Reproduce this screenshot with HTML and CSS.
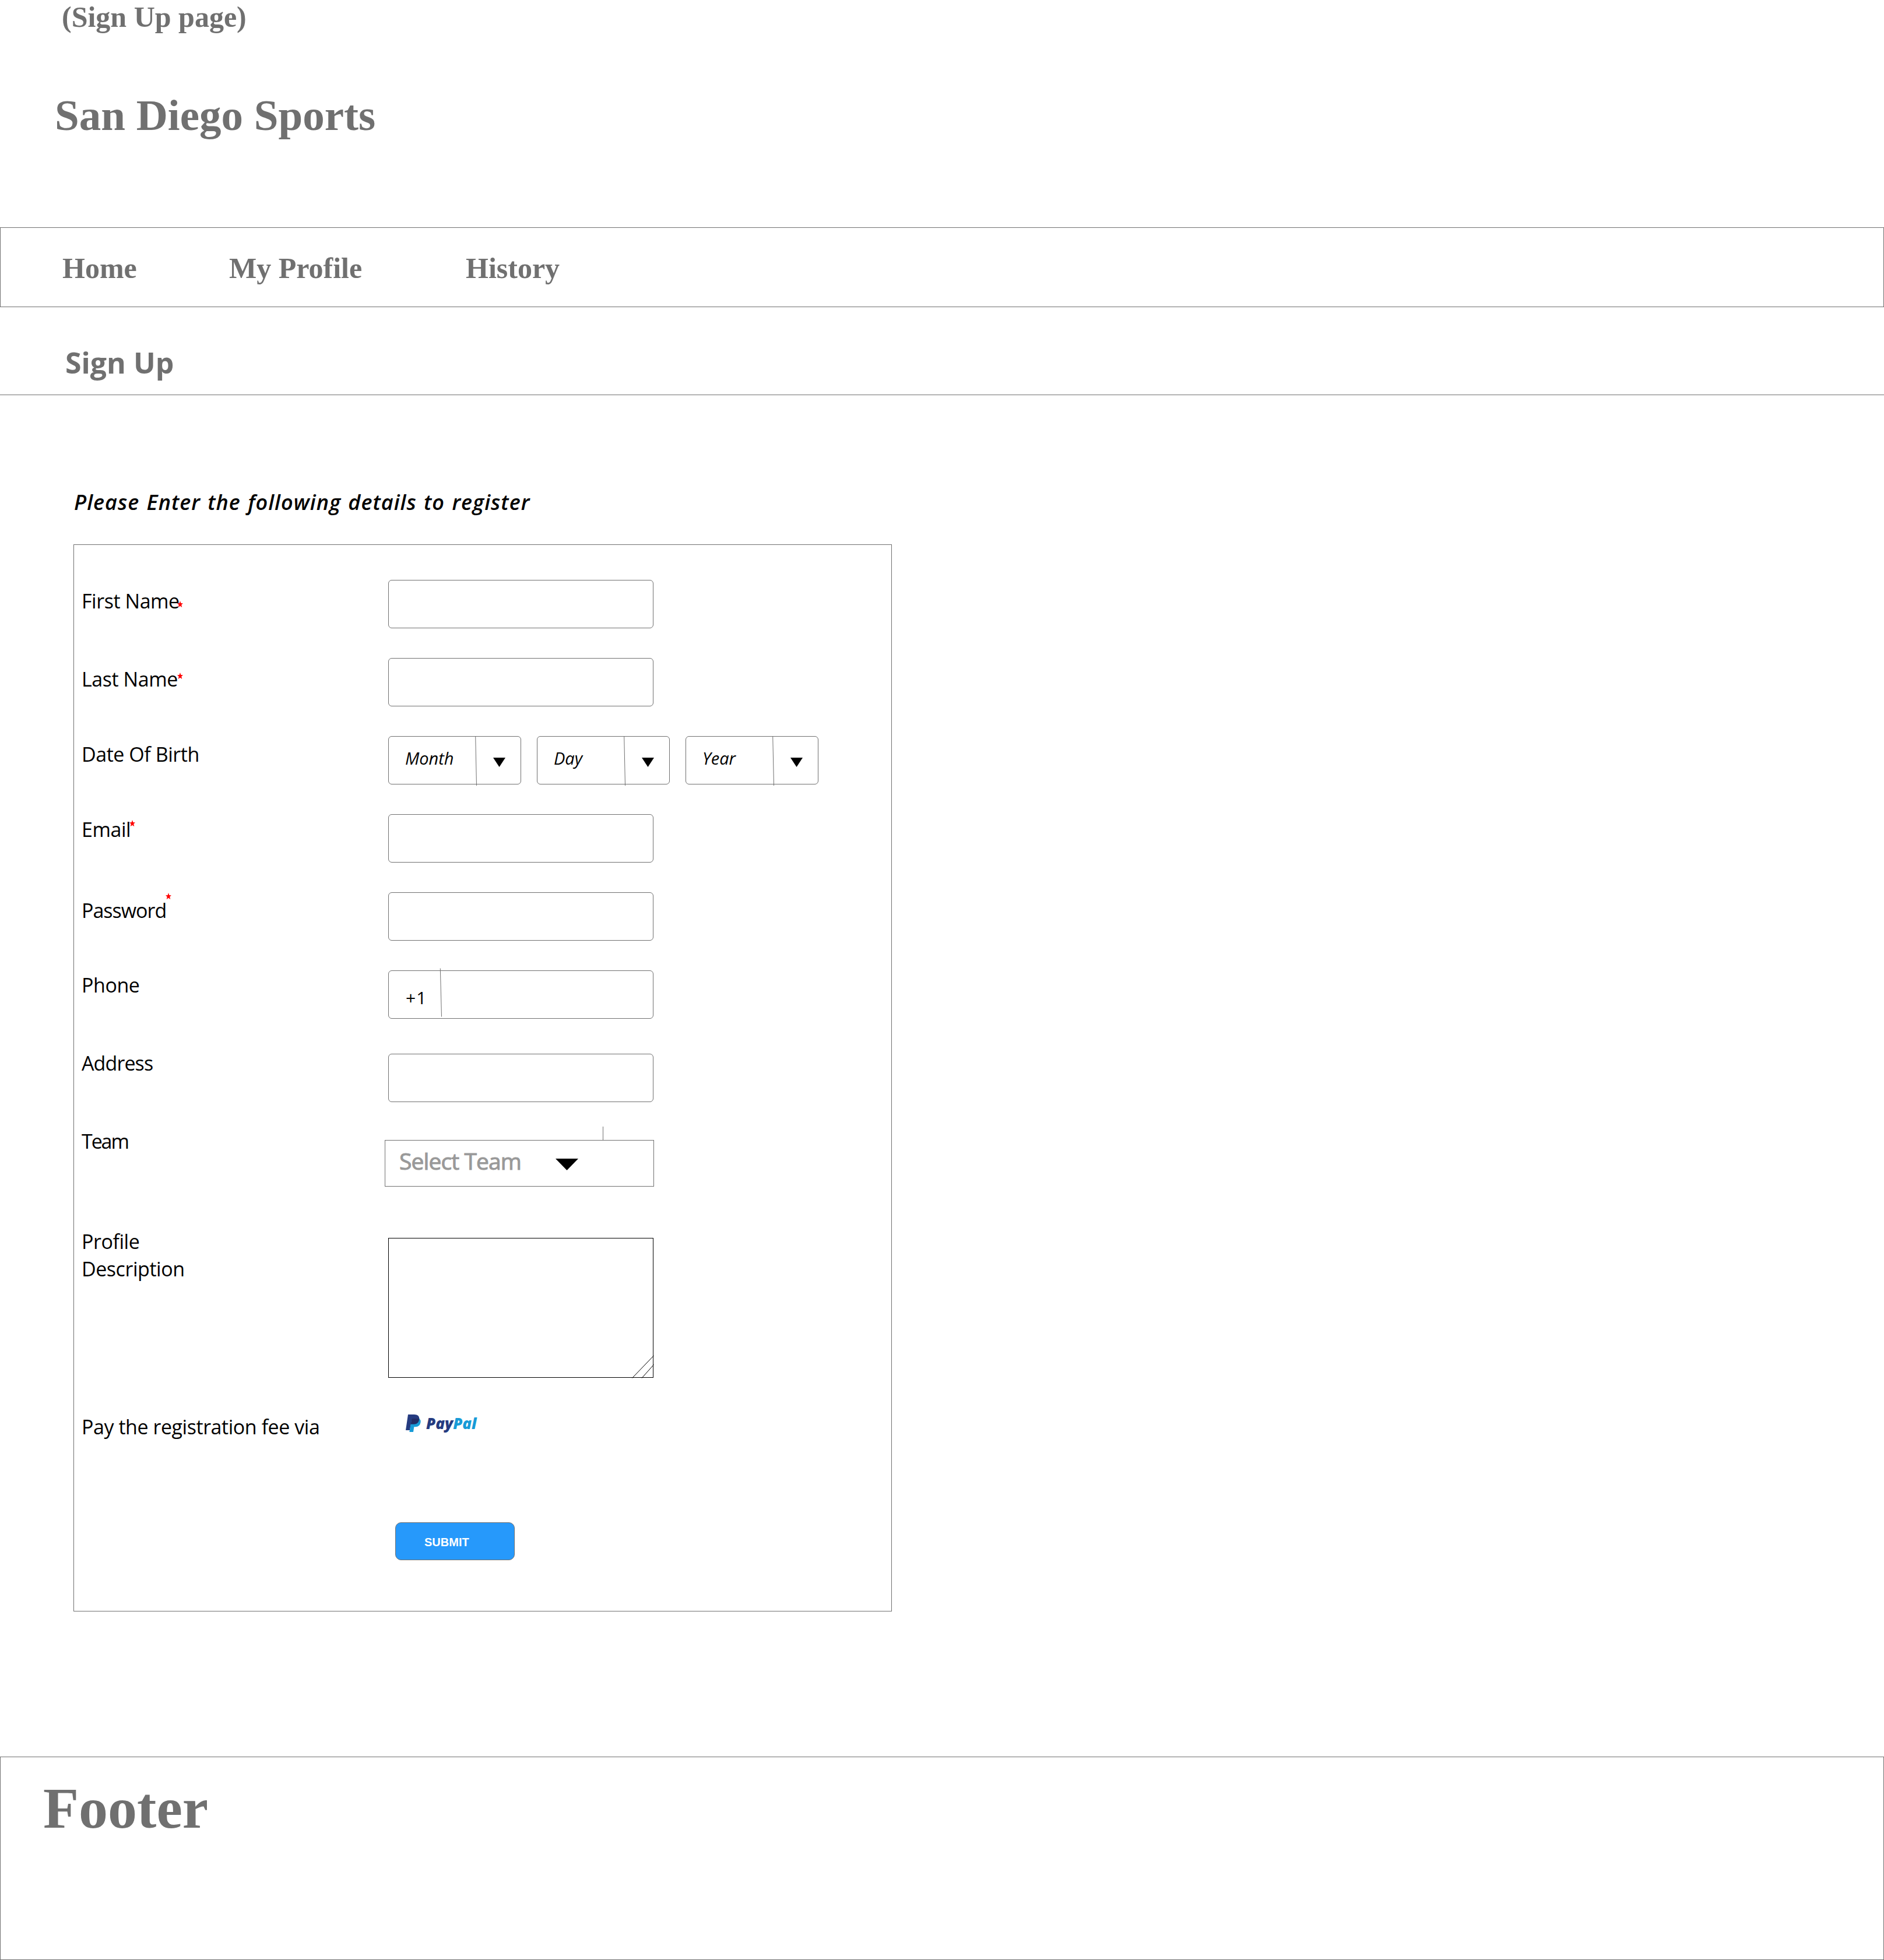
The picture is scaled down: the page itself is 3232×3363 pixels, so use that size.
FILE: index.html
```html
<!DOCTYPE html>
<html lang="en">
<head>
<meta charset="utf-8">
<title>San Diego Sports - Sign Up</title>
<link rel="stylesheet" href="styles.css">
</head>
<body>
<svg class="defs" width="0" height="0" aria-hidden="true">
  <symbol id="star" viewBox="0 0 9 10"><path fill="#f00" d="M4.500 0L5.700 3.600L9 3.800L6.500 6.200L7.500 10L4.500 7.900L1.500 10L2.500 6.200L0 3.800L3.300 3.600Z"/></symbol>
</svg>

<header class="masthead">
  <p class="page-note">(Sign Up page)</p>
  <h1 class="site-title">San Diego Sports</h1>
</header>

<nav class="nav">
  <a class="nav-link nav-home">Home</a>
  <a class="nav-link nav-profile">My Profile</a>
  <a class="nav-link">History</a>
</nav>

<div class="section-head"><h2 class="section-title">Sign Up</h2></div>

<main class="content">
  <p class="intro">Please Enter the following details to register</p>

  <form class="form">
    <div class="row">
      <label class="label label-first">First Name</label>
      <div class="field"></div>
      <svg class="star star-first"><use href="#star"/></svg>
    </div>
    <div class="row">
      <label class="label label-last">Last Name</label>
      <div class="field"></div>
      <svg class="star star-last"><use href="#star"/></svg>
    </div>
    <div class="row">
      <label class="label label-dob">Date Of Birth</label>
      <div class="dates">
        <div class="field date">
          <span class="date-text">Month</span>
          <svg class="date-arrow" viewBox="0 0 78 81"><path class="line" d="M.7-1L2.500 84"/><path d="M31 36H52L41.500 52Z"/></svg>
        </div>
        <div class="field date">
          <span class="date-text">Day</span>
          <svg class="date-arrow" viewBox="0 0 78 81"><path class="line" d="M.7-1L2.500 84"/><path d="M31 36H52L41.500 52Z"/></svg>
        </div>
        <div class="field date">
          <span class="date-text">Year</span>
          <svg class="date-arrow" viewBox="0 0 78 81"><path class="line" d="M.7-1L2.500 84"/><path d="M31 36H52L41.500 52Z"/></svg>
        </div>
      </div>
    </div>
    <div class="row">
      <label class="label label-email">Email</label>
      <div class="field"></div>
      <svg class="star star-email"><use href="#star"/></svg>
    </div>
    <div class="row">
      <label class="label label-password">Password</label>
      <div class="field"></div>
      <svg class="star star-password"><use href="#star"/></svg>
    </div>
    <div class="row row-phone">
      <label class="label label-phone">Phone</label>
      <div class="field phone">
        <span class="phone-code">+1</span>
        <svg class="phone-line" viewBox="0 0 4 81"><path class="line" d="M.3-4.500L2.500 78.500"/></svg>
      </div>
    </div>
    <div class="row row-address">
      <label class="label label-address">Address</label>
      <div class="field"></div>
    </div>
    <div class="row row-team">
      <label class="label label-team">Team</label>
      <div class="team">
        <span class="team-text">Select Team</span>
        <svg class="team-arrow" viewBox="0 0 39 20"><path d="M0 0H39L19.500 20Z"/></svg>
      </div>
    </div>
    <div class="row row-desc">
      <label class="label">Profile<br>Description</label>
      <div class="textarea">
        <svg class="resizer" viewBox="0 0 38 40"><path d="M.5 39.500L37.500 1M17 39.500L37.500 16.500"/></svg>
      </div>
    </div>
    <div class="row row-pay">
      <label class="label">Pay the registration fee via</label>
      <div class="paypal">
        <svg class="paypal-mark" viewBox="45 48 84 96">
          <path fill="#253b80" d="M60 51H92Q117 51 118 72Q117 100 92 101H75L69 132H48Z"/>
          <path fill="#179bd7" d="M79 72H118Q126 79 125 90Q121 115 98 115H91L87 141H67L74 101Z"/>
          <path fill="#222d65" d="M79 72H118Q116 101 92 101H74Z"/>
        </svg>
        <span class="paypal-text">Pay<span class="paypal-light">Pal</span></span>
      </div>
    </div>
    <div class="row row-submit">
      <button class="submit" type="button">SUBMIT</button>
    </div>
  </form>
</main>

<footer class="footer">Footer</footer>
</body>
</html>
```
FILE: styles.css
```css
* { box-sizing: border-box; }

body {
  margin: 0;
  background: #fff;
  color: #000;
  font-family: "Open Sans", "Noto Sans", sans-serif;
}

.defs { display: block; }

/* Header */
.masthead {
  height: 390px;
  padding-top: 1px;
  color: #707070;
  font-family: "Liberation Serif", serif;
  font-weight: 700;
}

.page-note {
  margin: 0;
  padding-left: 106px;
  font-size: 50px;
  line-height: 56px;
}

.site-title {
  margin: 98px 0 0;
  padding-left: 94px;
  font-size: 75px;
  line-height: 86px;
}

.nav {
  display: flex;
  height: 137px;
  padding: 41px 0 0 106px;
  border: 1px solid #707070;
}

.nav-link {
  color: #707070;
  font: 700 50px/56px "Liberation Serif", serif;
}

.nav-home { width: 286px; }
.nav-profile { width: 406px; }

.section-head {
  height: 151px;
  padding: 61px 0 0 112px;
  border-bottom: 1px solid #707070;
}

.section-title {
  margin: 0;
  color: #707070;
  font-size: 50px;
  line-height: 68px;
}

/* Form */
.content { padding: 159px 0 0 126px; }

.intro {
  margin: 0 0 47px;
  padding-left: 1px;
  font-size: 36px;
  font-style: italic;
  font-weight: 600;
  line-height: 50px;
  letter-spacing: 1px;
  word-spacing: 2px;
}

.form {
  width: 1404px;
  height: 1831px;
  padding-top: 60px;
  border: 1px solid #707070;
}

.row {
  position: relative;
  display: grid;
  grid-template-columns: 539px auto;
  justify-content: start;
  align-items: start;
  height: 134px;
}

.row-phone { height: 135px; }
.row-address { height: 134px; }
.row-team { height: 172px; }
.row-desc { height: 318px; }
.row-pay { height: 188px; }
.row-submit { height: 65px; }

.label {
  padding: 1px 0 0 13px;
  font-size: 34px;
  line-height: 47px;
  letter-spacing: -0.45px;
}

.label-first { padding-top: 13px; }
.label-last { padding-top: 13px; }
.label-dob { padding-top: 8px; }
.label-email { padding-top: 3px; }
.label-password { padding-top: 8px; letter-spacing: -1px; }
.label-phone { padding-top: 2px; }
.label-address { letter-spacing: -0.9px; }
.label-team { letter-spacing: -2.1px; }

.field {
  display: flex;
  width: 455px;
  height: 83px;
  border: 1px solid #707070;
  border-radius: 6px;
}

.row-address .field { margin-top: 8px; }

.line { fill: none; stroke: #707070; stroke-width: 1; }

.star {
  position: absolute;
  width: 10px;
  height: 11px;
}

.star-first { left: 177px; top: 36px; }
.star-last { left: 177px; top: 25px; }
.star-email { left: 95px; top: 10px; }
.star-password { left: 157px; top: 1px; }

.dates { display: flex; gap: 27px; }

.date { width: 228px; }

.date-text {
  width: 148px;
  padding-left: 28px;
  font-size: 29px;
  font-style: italic;
  line-height: 74px;
}

.date-arrow {
  width: 78px;
  height: 81px;
  overflow: visible;
}

.phone-code {
  width: 88px;
  padding: 11px 0 0 29px;
  font-size: 30px;
  line-height: 70px;
  letter-spacing: 1px;
}

.phone-line {
  width: 4px;
  height: 81px;
  overflow: visible;
}

.team {
  position: relative;
  display: flex;
  width: 462px;
  height: 80px;
  margin: 22px 0 0 -6px;
  border: 1px solid #707070;
}

.team::before {
  content: "";
  position: absolute;
  left: 373px;
  top: -24px;
  width: 1px;
  height: 23px;
  background: #707070;
}

.team-text {
  width: 292px;
  padding-left: 24px;
  color: #999;
  font-size: 39px;
  line-height: 70px;
  letter-spacing: -0.9px;
  -webkit-text-stroke: 1px #999;
}

.team-arrow {
  width: 39px;
  height: 20px;
  margin-top: 31px;
}

.textarea {
  position: relative;
  width: 455px;
  height: 240px;
  margin-top: 18px;
  border: 1px solid #000;
}

.resizer {
  position: absolute;
  right: -2px;
  bottom: -2px;
  width: 38px;
  height: 40px;
  fill: none;
  stroke: #000;
}

.paypal {
  display: flex;
  padding-left: 29px;
}

.paypal-mark {
  width: 28px;
  height: 32px;
  margin: 2px 8px 0 0;
}

.paypal-text {
  color: #253b80;
  font-size: 26px;
  font-style: italic;
  font-weight: 800;
  line-height: 37px;
}

.paypal-light { color: #179bd7; }

.submit {
  grid-column: 2;
  width: 205px;
  height: 65px;
  margin-left: 12px;
  padding: 2px 0 0 49px;
  border: 1px solid #707070;
  border-radius: 10px;
  background: #2699fb;
  color: #fff;
  font: 700 20px/24px "Liberation Sans", Arial, sans-serif;
  text-align: left;
}

/* Footer */
.footer {
  height: 349px;
  margin-top: 249px;
  padding: 30px 0 0 73px;
  border: 1px solid #707070;
  color: #707070;
  font: 700 100px/116px "Liberation Serif", serif;
}
```
